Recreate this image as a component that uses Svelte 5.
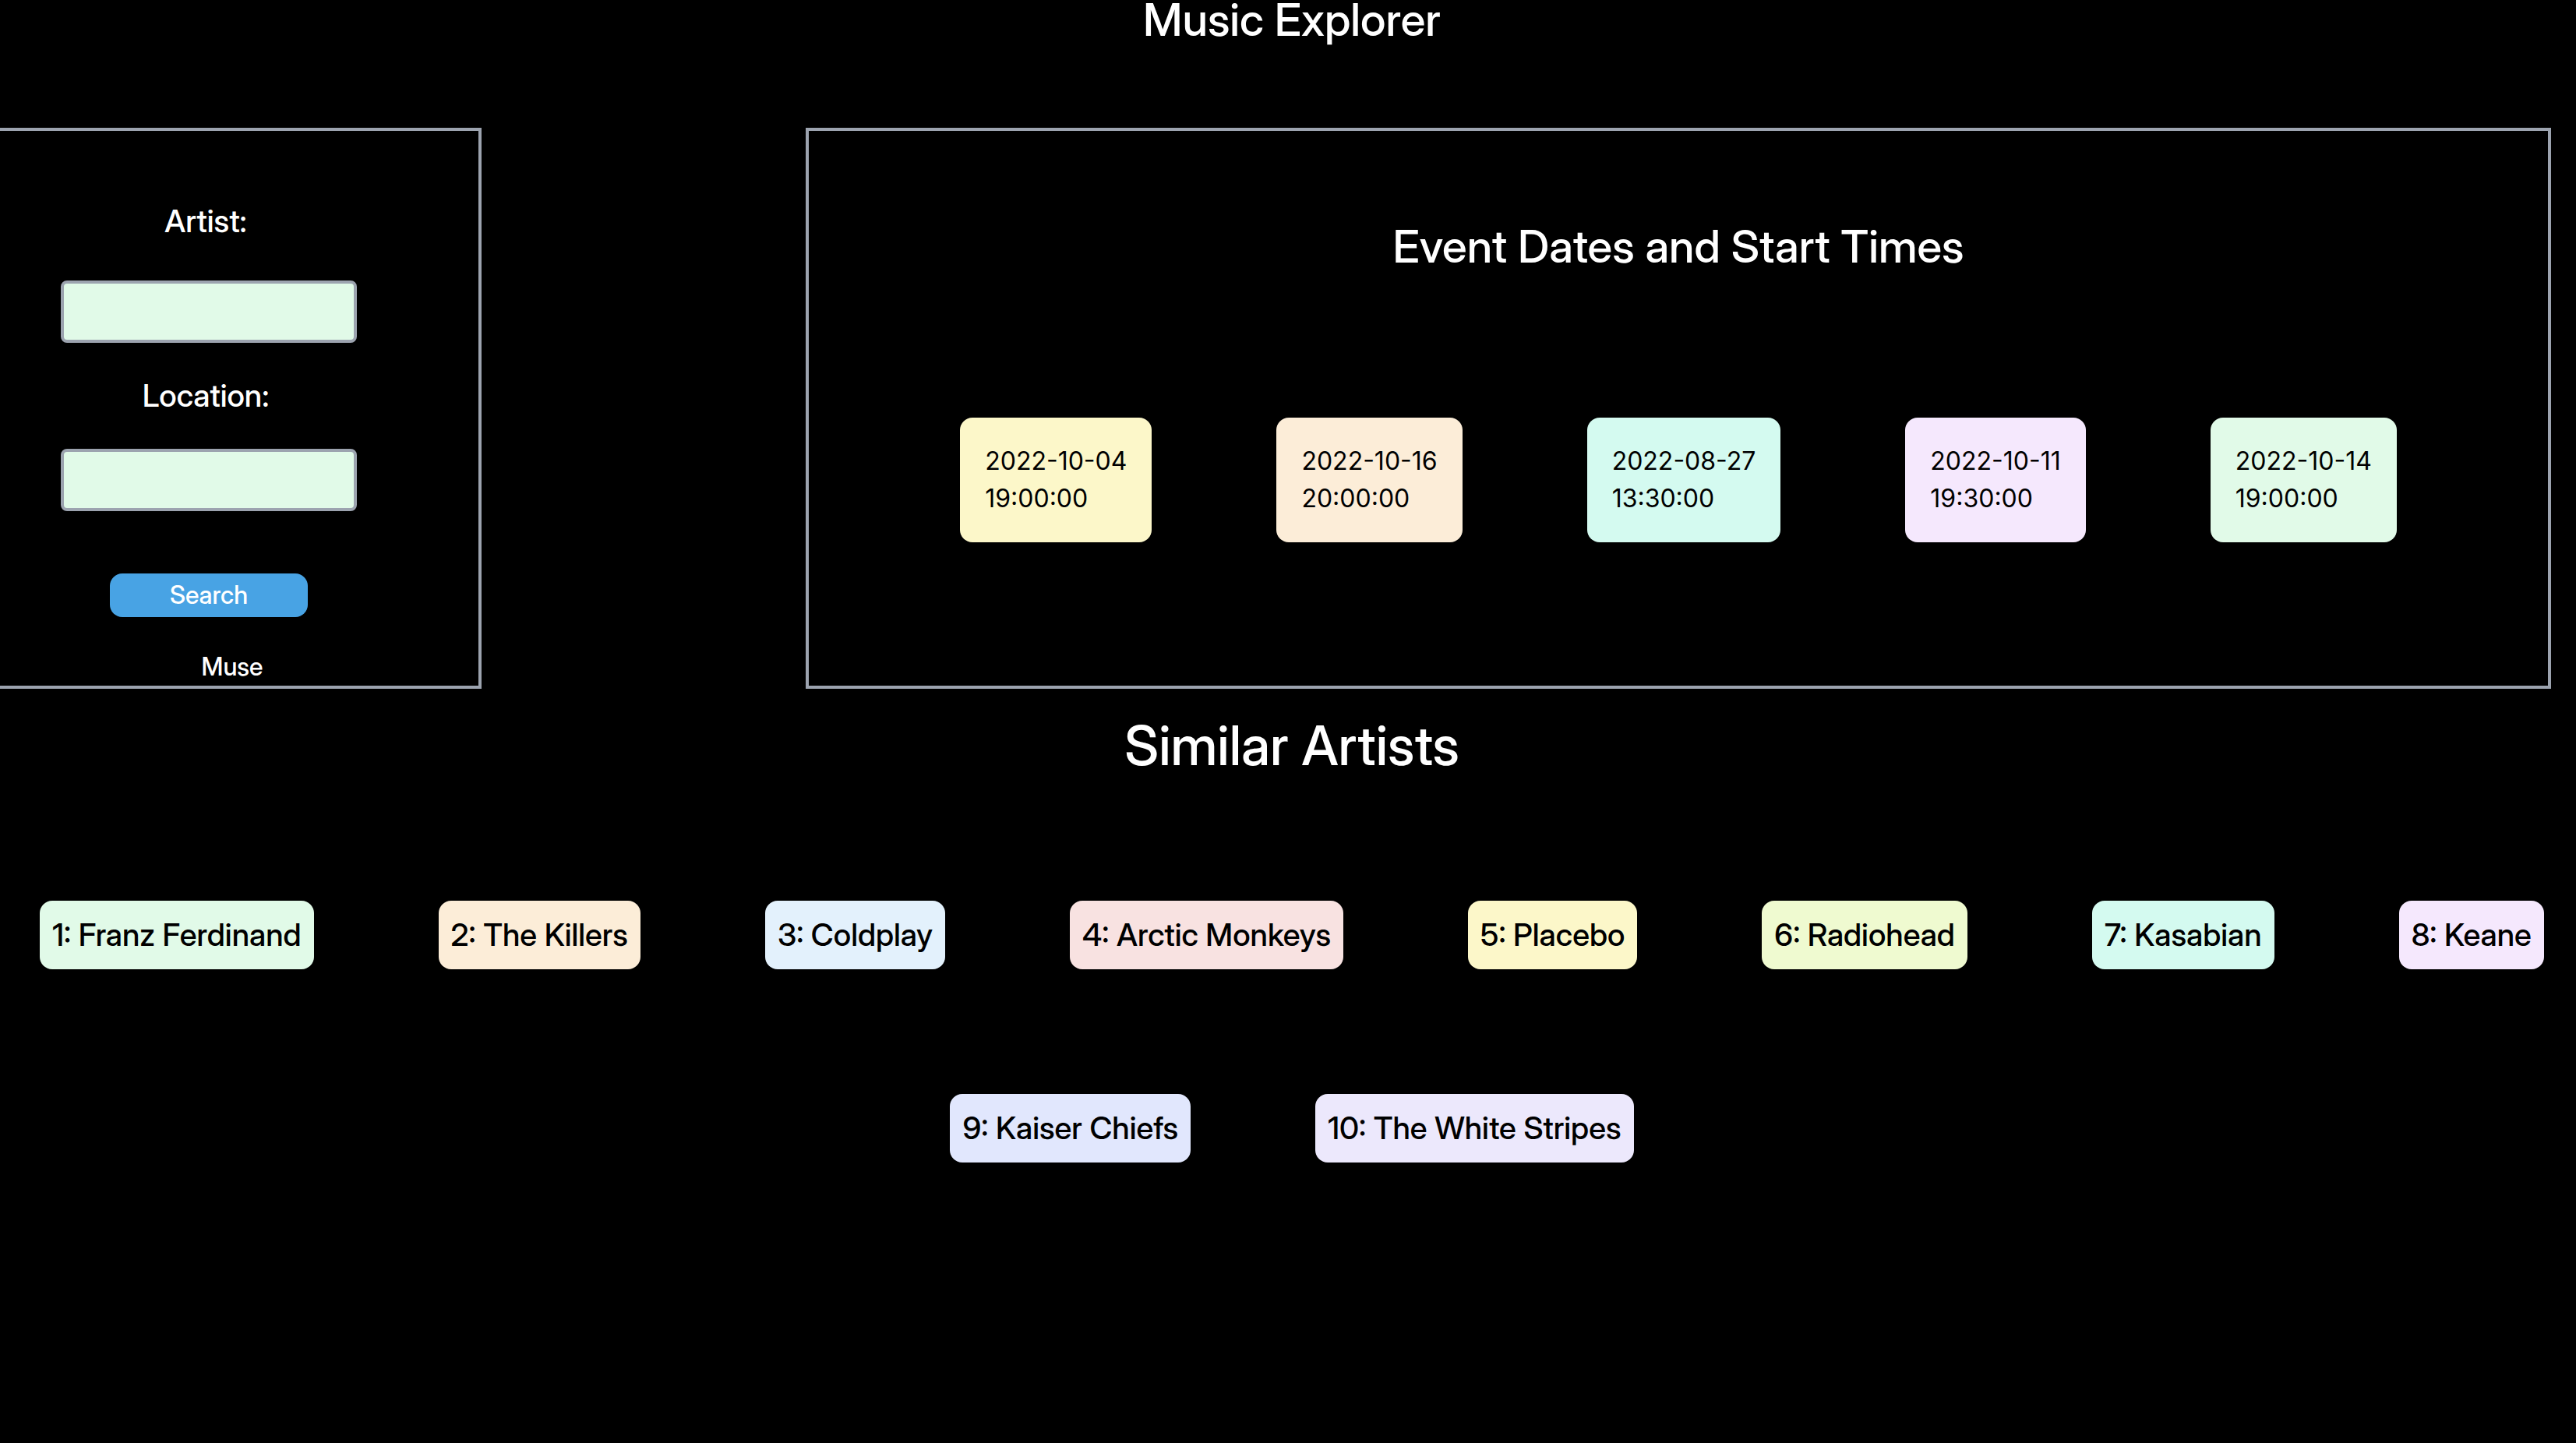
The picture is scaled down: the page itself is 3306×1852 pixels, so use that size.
<script>
  let artist = $state('');
  let location = $state('');
  let current = 'Muse';

  const events = [
    { date: '2022-10-04', time: '19:00:00', tone: 'yellow' },
    { date: '2022-10-16', time: '20:00:00', tone: 'orange' },
    { date: '2022-08-27', time: '13:30:00', tone: 'teal' },
    { date: '2022-10-11', time: '19:30:00', tone: 'purple' },
    { date: '2022-10-14', time: '19:00:00', tone: 'green' },
  ];

  const similar = [
    { name: 'Franz Ferdinand', tone: 'green' },
    { name: 'The Killers', tone: 'orange' },
    { name: 'Coldplay', tone: 'sky' },
    { name: 'Arctic Monkeys', tone: 'red' },
    { name: 'Placebo', tone: 'yellow' },
    { name: 'Radiohead', tone: 'lime' },
    { name: 'Kasabian', tone: 'teal' },
    { name: 'Keane', tone: 'purple' },
    { name: 'Kaiser Chiefs', tone: 'indigo' },
    { name: 'The White Stripes', tone: 'violet' },
  ];
</script>

<div class="page">
  <h1>Music Explorer</h1>

  <div class="panels">
    <form class="search" onsubmit={(e) => e.preventDefault()}>
      <label for="artist">Artist:</label>
      <input id="artist" type="text" bind:value={artist} />
      <label class="second" for="location">Location:</label>
      <input id="location" type="text" bind:value={location} />
      <button type="submit">Search</button>
      <p>{current}</p>
    </form>

    <section class="events">
      <h2>Event Dates and Start Times</h2>
      <ul>
        {#each events as event}
          <li class="event {event.tone}">
            <span>{event.date}</span>
            <span>{event.time}</span>
          </li>
        {/each}
      </ul>
    </section>
  </div>

  <section class="similar">
    <h2>Similar Artists</h2>
    <ul>
      {#each similar as item, i}
        <li class="chip {item.tone}">{i + 1}: {item.name}</li>
      {/each}
    </ul>
  </section>
</div>

<style>
  :global(body) {
    background: #000;
  }

  .page {
    box-sizing: border-box;
    min-height: 100vh;
    background: #000;
    color: #fff;
    font-family: 'Inter Display', Inter, 'Liberation Sans', sans-serif;
    font-size: 32px;
    font-weight: 500;
    line-height: 48px;
  }

  h1,
  h2,
  p,
  ul {
    margin: 0;
    padding: 0;
    font-weight: inherit;
  }

  h1,
  h2 {
    text-align: center;
  }

  ul {
    display: flex;
    flex-wrap: wrap;
    justify-content: center;
    gap: 160px;
    list-style: none;
  }

  h1 {
    padding-left: 10px;
    font-size: 58px;
    line-height: 50px;
  }

  .panels {
    display: flex;
    gap: 416px;
    padding: 114px 32px 0 0;
  }

  .search {
    box-sizing: border-box;
    flex: 0 0 618px;
    display: flex;
    flex-direction: column;
    align-items: center;
    padding: 88px 78px 0 0;
    border: 4px solid #9ca3af;
    border-left: 0;
  }

  label,
  .chip {
    font-size: 40px;
    line-height: 56px;
  }

  label {
    padding-right: 8px;
  }

  .second {
    margin-top: 40px;
  }

  input {
    box-sizing: border-box;
    width: 380px;
    height: 80px;
    margin-top: 40px;
    padding: 0 16px;
    border: 4px solid #9ca3af;
    border-radius: 8px;
    background: #e1fae8;
    color: #000;
    font: inherit;
  }

  label:first-child + input {
    margin-top: 48px;
  }

  button {
    width: 254px;
    height: 56px;
    margin-top: 80px;
    padding: 0;
    border: 0;
    border-radius: 16px;
    background: #48a3e4;
    color: #fff;
    font: inherit;
  }

  .search p {
    margin-top: 40px;
    padding-left: 60px;
  }

  .events {
    flex: 1;
    padding: 112px 0 184px;
    border: 4px solid #9ca3af;
  }

  .events h2 {
    margin-bottom: 184px;
    font-size: 58px;
    line-height: 72px;
  }

  .event {
    display: flex;
    flex-direction: column;
    padding: 32px;
    border-radius: 16px;
    color: #000;
    font-family: Inter, 'Liberation Sans', sans-serif;
    font-weight: 400;
  }

  .similar {
    padding: 32px 0 80px 10px;
  }

  .similar h2 {
    margin-bottom: 158px;
    font-size: 70px;
    line-height: 82px;
  }

  .chip {
    padding: 16px;
    border-radius: 16px;
    color: #000;
  }

  .green { background: #e1fae8; }
  .orange { background: #fcedd8; }
  .sky { background: #e3f1fc; }
  .red { background: #f8e2e1; }
  .yellow { background: #fcf7c9; }
  .lime { background: #effad0; }
  .teal { background: #d4faf0; }
  .purple { background: #f5e8fd; }
  .indigo { background: #e1e7fd; }
  .violet { background: #ece8fc; }
</style>
